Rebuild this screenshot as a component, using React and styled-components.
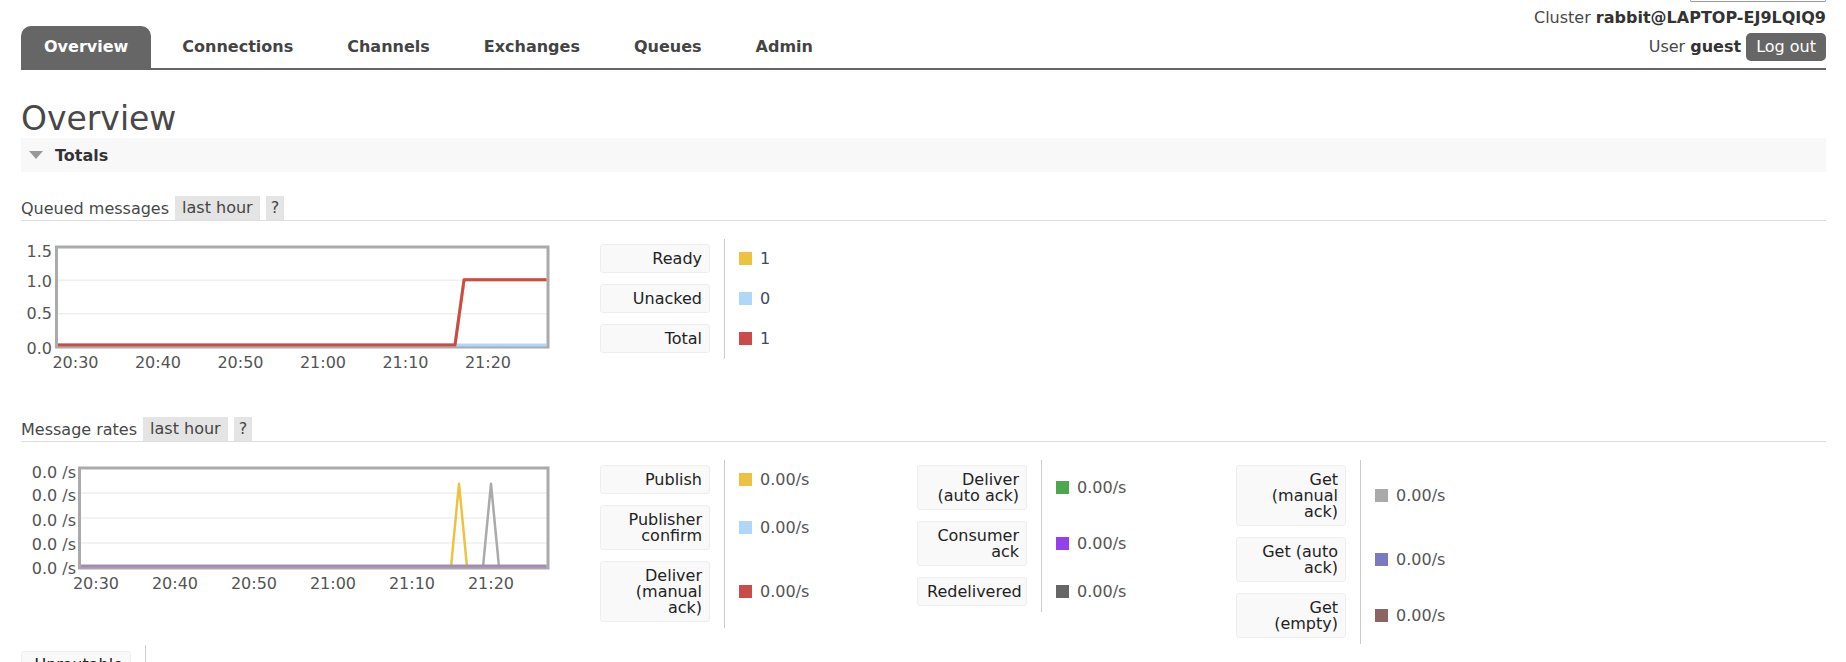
import React from 'react';
import styled, { createGlobalStyle } from 'styled-components';

const GlobalStyle = createGlobalStyle`
  html, body {
    margin: 0;
    padding: 0;
    background: #fff;
    overflow: hidden;
  }
  body {
    font-family: 'DejaVu Sans', Verdana, sans-serif;
    font-size: 16px;
    color: #484848;
  }
`;

const TABS = ['Overview', 'Connections', 'Channels', 'Exchanges', 'Queues', 'Admin'];

const QUEUED = [
  { label: 'Ready', color: '#edc240', value: '1' },
  { label: 'Unacked', color: '#afd8f8', value: '0' },
  { label: 'Total', color: '#cb4b4b', value: '1' },
];

const RATE_COLUMNS = [
  [
    { label: 'Publish', color: '#edc240', value: '0.00/s' },
    { label: 'Publisher\nconfirm', color: '#afd8f8', value: '0.00/s' },
    { label: 'Deliver\n(manual\nack)', color: '#cb4b4b', value: '0.00/s' },
  ],
  [
    { label: 'Deliver\n(auto ack)', color: '#4da74d', value: '0.00/s' },
    { label: 'Consumer\nack', color: '#9440ed', value: '0.00/s' },
    { label: 'Redelivered', color: '#666666', value: '0.00/s' },
  ],
  [
    { label: 'Get\n(manual\nack)', color: '#aaaaaa', value: '0.00/s' },
    { label: 'Get (auto\nack)', color: '#7c79c3', value: '0.00/s' },
    { label: 'Get\n(empty)', color: '#8c6462', value: '0.00/s' },
  ],
];

const UNROUTABLE = [
  { label: 'Unroutable\n(return)', color: '#c1b47a', value: '0.00/s' },
  { label: 'Unroutable\n(drop)', color: '#7fb3c9', value: '0.00/s' },
];

const TIMES = ['20:30', '20:40', '20:50', '21:00', '21:10', '21:20'];

// minutes after 20:30
const QUEUED_SERIES = [
  { color: '#edc240', width: 3, points: [[-3, 0], [46, 0], [47.1, 1], [60, 1]] },
  { color: '#afd8f8', width: 3, points: [[-3, 0], [60, 0]] },
  { color: '#cb4b4b', width: 3, points: [[-3, 0], [46, 0], [47.1, 1], [60, 1]] },
];

const RATE_SERIES = [
  { color: '#edc240', width: 2.5, points: [[44.95, 0], [45.95, 0.84], [46.95, 0]] },
  { color: '#aaaaaa', width: 2.5, points: [[49, 0], [50, 0.84], [51, 0]] },
  { color: '#a48bb4', width: 3, points: [[-3, 0], [60, 0]] },
];

const Page = styled.div`
  padding: 0 20px 0 21px;
`;

const Header = styled.header`
  display: flex;
  justify-content: space-between;
  align-items: flex-end;
  border-bottom: 2px solid #666;
`;

const TabList = styled.nav`
  display: flex;
  gap: 8px;
`;

const Tab = styled.a`
  display: block;
  padding: 11px 23px;
  line-height: 20px;
  font-weight: bold;
  border-radius: 10px 10px 0 0;
  color: ${(p) => (p.$active ? '#fff' : '#444')};
  background: ${(p) => (p.$active ? '#666' : 'transparent')};
  cursor: pointer;
`;

const Status = styled.div`
  display: flex;
  flex-direction: column;
  align-items: flex-end;
  padding-bottom: 7px;
`;

const RefreshStub = styled.div`
  width: 134px;
  height: 1px;
  border: 1px solid #999;
  border-top: none;
  border-radius: 0 0 2px 2px;
`;

const StatusLine = styled.div`
  display: flex;
  align-items: center;
  gap: 5px;
  line-height: 20px;
  margin-top: ${(p) => p.$top}px;
  white-space: nowrap;

  b {
    color: #333;
  }
`;

const LogOut = styled.button`
  font: inherit;
  line-height: 20px;
  padding: 4px 10px;
  border: none;
  border-radius: 5px;
  background: #666;
  color: #fff;
`;

const Title = styled.h1`
  margin: 30px 0 0;
  font-size: 33px;
  font-weight: normal;
  line-height: 38px;
  color: #484848;
`;

const SectionBar = styled.div`
  display: flex;
  align-items: center;
  height: 34px;
  padding-left: 8px;
  background: #f8f8f8;
  font-weight: bold;
  color: #333;
`;

const Arrow = styled.span`
  width: 0;
  height: 0;
  border-left: 7.5px solid transparent;
  border-right: 7.5px solid transparent;
  border-top: 8px solid #999;
  margin-right: 12px;
`;

const SubHeading = styled.div`
  display: flex;
  align-items: center;
  height: 24px;
  border-bottom: 1px solid #ddd;
  margin-top: ${(p) => p.$top}px;
  color: #484848;
`;

const Badge = styled.span`
  background: #e4e4e4;
  line-height: 24px;
  padding: 0 ${(p) => (p.$narrow ? 5 : 7)}px;
  margin-left: 6px;
  color: #444;
`;

const ChartRow = styled.div`
  display: flex;
  align-items: flex-start;
  margin-top: 16px;
`;

const ChartBox = styled.svg`
  flex: none;
  display: block;
  margin-right: 49px;
  font-family: 'DejaVu Sans', Verdana, sans-serif;
  font-size: 16px;
`;

const Legend = styled.table`
  flex: none;
  width: ${(p) => p.$width}px;
  margin-top: 1.5px;
  border-collapse: collapse;
`;

const LegendHead = styled.th`
  width: 110px;
  padding: 5.5px 14px 5.5px 0;
  font-weight: normal;
  text-align: right;
  vertical-align: middle;
`;

const LabelBox = styled.div`
  box-sizing: border-box;
  width: 110px;
  padding: 5.5px 7px 5.5px 9px;
  line-height: 16px;
  white-space: pre-line;
  background: #f9f9f9;
  border: 1px solid #eee;
  border-radius: 3px;
  color: #222;
`;

const LegendValue = styled.td`
  border-left: 1px solid #ccc;
  padding-left: 14px;
  vertical-align: middle;
`;

const ValueLine = styled.div`
  display: flex;
  align-items: center;
  gap: 8px;
  color: ${(p) => (p.$count ? '#3d4a66' : '#555')};
  line-height: 20px;
`;

const Swatch = styled.span`
  width: 13px;
  height: 13px;
  background: ${(p) => p.$color};
`;

const LegendTable = ({ rows, width = 318 }) => (
  <Legend $width={width}>
    <tbody>
      {rows.map((r) => (
        <tr key={r.label}>
          <LegendHead>
            <LabelBox>{r.label}</LabelBox>
          </LegendHead>
          <LegendValue>
            <ValueLine $count={!r.value.includes('/')}>
              <Swatch $color={r.color} />
              {r.value}
            </ValueLine>
          </LegendValue>
        </tr>
      ))}
    </tbody>
  </Legend>
);

const Chart = ({ id, plotLeft, labelRight, x0, k, vmax, yLabels, grid, series }) => {
  const top = 10;
  const bottom = 110;
  const right = 527;
  const sx = (t) => x0 + t * k;
  const sy = (v) => 108 - (v / vmax) * 98;
  const gy = (v) => bottom - (v / vmax) * (bottom - top);

  return (
    <ChartBox width={530} height={140}>
      <defs>
        <clipPath id={id}>
          <rect x={plotLeft + 1.5} y={0} width={right - plotLeft - 3} height={140} />
        </clipPath>
      </defs>
      {grid.map((v) => (
        <line key={v} x1={plotLeft} x2={right} y1={gy(v)} y2={gy(v)} stroke="#efefef" strokeWidth={1.5} />
      ))}
      <rect x={plotLeft} y={top} width={right - plotLeft} height={bottom - top} fill="none" stroke="#aaa" strokeWidth={3} />
      <g clipPath={`url(#${id})`}>
        {series.map((s, i) => (
          <polyline
            key={i}
            fill="none"
            stroke={s.color}
            strokeWidth={s.width}
            strokeLinejoin="round"
            points={s.points.map(([t, v]) => `${sx(t)},${sy(v)}`).join(' ')}
          />
        ))}
      </g>
      {yLabels.map((l) => (
        <text key={l.y} x={labelRight} y={l.y} textAnchor="end" dominantBaseline="central" fill="#545454">
          {l.text}
        </text>
      ))}
      {TIMES.map((t, i) => (
        <text key={t} x={sx(i * 10)} y={125} textAnchor="middle" dominantBaseline="central" fill="#545454">
          {t}
        </text>
      ))}
    </ChartBox>
  );
};

export default function App() {
  return (
    <Page>
      <GlobalStyle />
      <Header>
        <TabList>
          {TABS.map((t, i) => (
            <Tab key={t} $active={i === 0}>
              {t}
            </Tab>
          ))}
        </TabList>
        <Status>
          <RefreshStub />
          <StatusLine $top={6}>
            <span>
              Cluster <b>rabbit@LAPTOP-EJ9LQIQ9</b>
            </span>
          </StatusLine>
          <StatusLine $top={5}>
            <span>
              User <b>guest</b>
            </span>
            <LogOut>Log out</LogOut>
          </StatusLine>
        </Status>
      </Header>

      <Title>Overview</Title>
      <SectionBar>
        <Arrow />
        Totals
      </SectionBar>

      <SubHeading $top={24}>
        Queued messages
        <Badge>last hour</Badge>
        <Badge $narrow>?</Badge>
      </SubHeading>
      <ChartRow>
        <Chart
          id="queued"
          plotLeft={35.5}
          labelRight={31}
          x0={54.5}
          k={8.25}
          vmax={1.5}
          grid={[0.5, 1]}
          yLabels={[
            { text: '1.5', y: 14 },
            { text: '1.0', y: 44.5 },
            { text: '0.5', y: 76.5 },
            { text: '0.0', y: 111 },
          ]}
          series={QUEUED_SERIES}
        />
        <LegendTable rows={QUEUED} />
      </ChartRow>

      <SubHeading $top={40}>
        Message rates
        <Badge>last hour</Badge>
        <Badge $narrow>?</Badge>
      </SubHeading>
      <ChartRow>
        <Chart
          id="rates"
          plotLeft={58.5}
          labelRight={55}
          x0={75}
          k={7.9}
          vmax={1}
          grid={[0.25, 0.5, 0.75]}
          yLabels={[
            { text: '0.0 /s', y: 14 },
            { text: '0.0 /s', y: 37 },
            { text: '0.0 /s', y: 62 },
            { text: '0.0 /s', y: 86.5 },
            { text: '0.0 /s', y: 110 },
          ]}
          series={RATE_SERIES}
        />
        {RATE_COLUMNS.map((rows, i) => (
          <LegendTable key={i} rows={rows} width={i === 0 ? 317 : 319} />
        ))}
      </ChartRow>
      <LegendTable rows={UNROUTABLE} />
    </Page>
  );
}
